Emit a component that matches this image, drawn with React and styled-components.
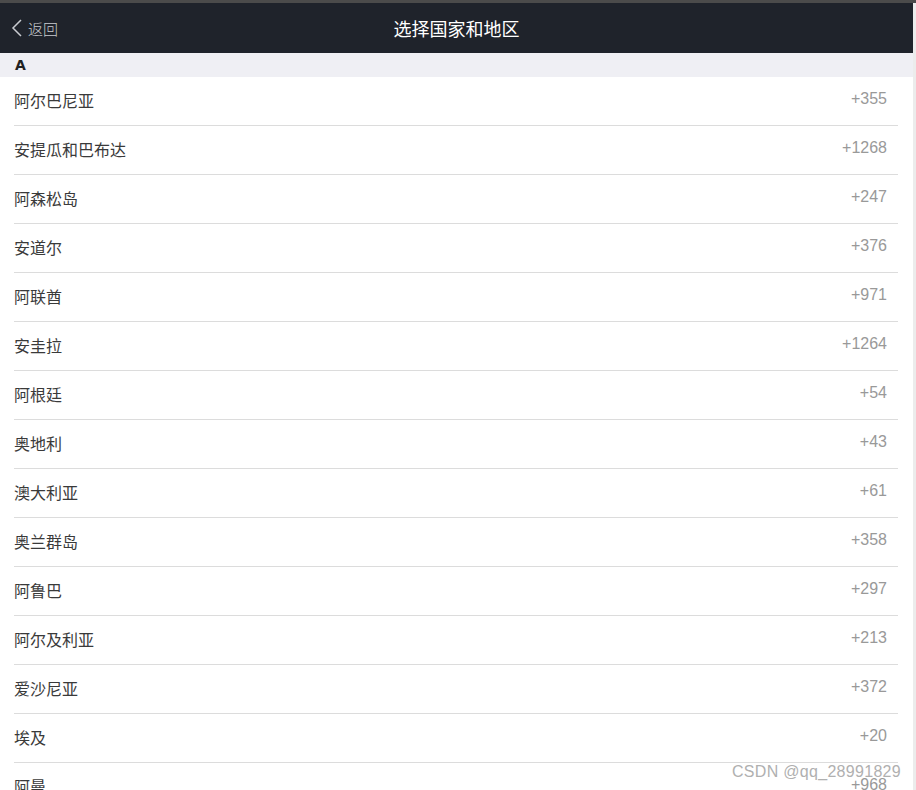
import React from 'react';
import styled, { createGlobalStyle } from 'styled-components';

const countries = [
  ['阿尔巴尼亚', '+355'],
  ['安提瓜和巴布达', '+1268'],
  ['阿森松岛', '+247'],
  ['安道尔', '+376'],
  ['阿联酋', '+971'],
  ['安圭拉', '+1264'],
  ['阿根廷', '+54'],
  ['奥地利', '+43'],
  ['澳大利亚', '+61'],
  ['奥兰群岛', '+358'],
  ['阿鲁巴', '+297'],
  ['阿尔及利亚', '+213'],
  ['爱沙尼亚', '+372'],
  ['埃及', '+20'],
  ['阿曼', '+968'],
];

const GlobalStyle = createGlobalStyle`
  html, body {
    margin: 0;
    padding: 0;
    height: 790px;
    overflow: hidden;
    background: #ffffff;
    font-family: "Liberation Sans", "Noto Sans CJK SC", sans-serif;
  }
`;

const Page = styled.div`
  display: flex;
  flex-direction: row;
  height: 790px;
  position: relative;
  overflow: hidden;
`;

const Main = styled.div`
  flex: 1;
  display: flex;
  flex-direction: column;
  border-top: 3px solid #4b4b4b;
`;

const Scrollbar = styled.div`
  width: 3px;
  background: #ececec;
  border-top: 3px solid #4b4b4b;
`;

const Header = styled.header`
  flex-shrink: 0;
  height: 50px;
  background: #1f232b;
  display: flex;
  align-items: center;
  position: relative;
`;

const Back = styled.div`
  display: flex;
  align-items: center;
  gap: 5px;
  padding-left: 11px;
  color: #c9ccd1;
  font-size: 15px;
  font-family: "Noto Sans CJK SC", sans-serif;
  font-weight: 300;
`;

const Title = styled.h1`
  position: absolute;
  left: 0;
  right: 0;
  margin: 0;
  text-align: center;
  color: #ffffff;
  font-size: 18px;
  font-weight: 400;
  font-family: "Noto Sans CJK SC", sans-serif;
  pointer-events: none;
`;

const SectionHead = styled.div`
  flex-shrink: 0;
  height: 24px;
  line-height: 25px;
  background: #efeff4;
  padding-left: 15px;
  font-size: 14px;
  font-weight: 700;
  color: #222;
  font-family: "DejaVu Sans", "Liberation Sans", sans-serif;
`;

const List = styled.ul`
  flex-shrink: 0;
  list-style: none;
  margin: 0;
  padding: 0 15px 0 14px;
`;

const Row = styled.li`
  height: 48px;
  display: flex;
  align-items: center;
  justify-content: space-between;
  border-bottom: 1px solid #dcdcdc;
  padding-right: 11px;
`;

const Name = styled.span`
  font-size: 16px;
  color: #3a3a3a;
  font-family: "Noto Sans CJK SC", sans-serif;
  margin-top: -2px;
`;

const Code = styled.span`
  font-size: 16px;
  color: #999;
  font-family: "Liberation Sans", Arial, sans-serif;
  margin-top: -4px;
`;

const Watermark = styled.div`
  position: absolute;
  right: 15px;
  bottom: 9px;
  font-size: 16px;
  letter-spacing: 0.3px;
  color: #b0b0b0;
  font-family: "Liberation Sans", Arial, sans-serif;
  text-shadow: 0 0 2px #fff;
`;

export default function App() {
  return (
    <>
      <GlobalStyle />
      <Page>
        <Main>
          <Header>
            <Back>
              <svg width="12" height="20" viewBox="0 0 12 20">
                <path d="M10 2 L2 10 L10 18" fill="none" stroke="#c9ccd1" strokeWidth="1.5" />
              </svg>
              返回
            </Back>
            <Title>选择国家和地区</Title>
          </Header>
          <SectionHead>A</SectionHead>
          <List>
            {countries.map(([name, code]) => (
              <Row key={name}>
                <Name>{name}</Name>
                <Code>{code}</Code>
              </Row>
            ))}
          </List>
        </Main>
        <Scrollbar />
        <Watermark>CSDN @qq_28991829</Watermark>
      </Page>
    </>
  );
}
